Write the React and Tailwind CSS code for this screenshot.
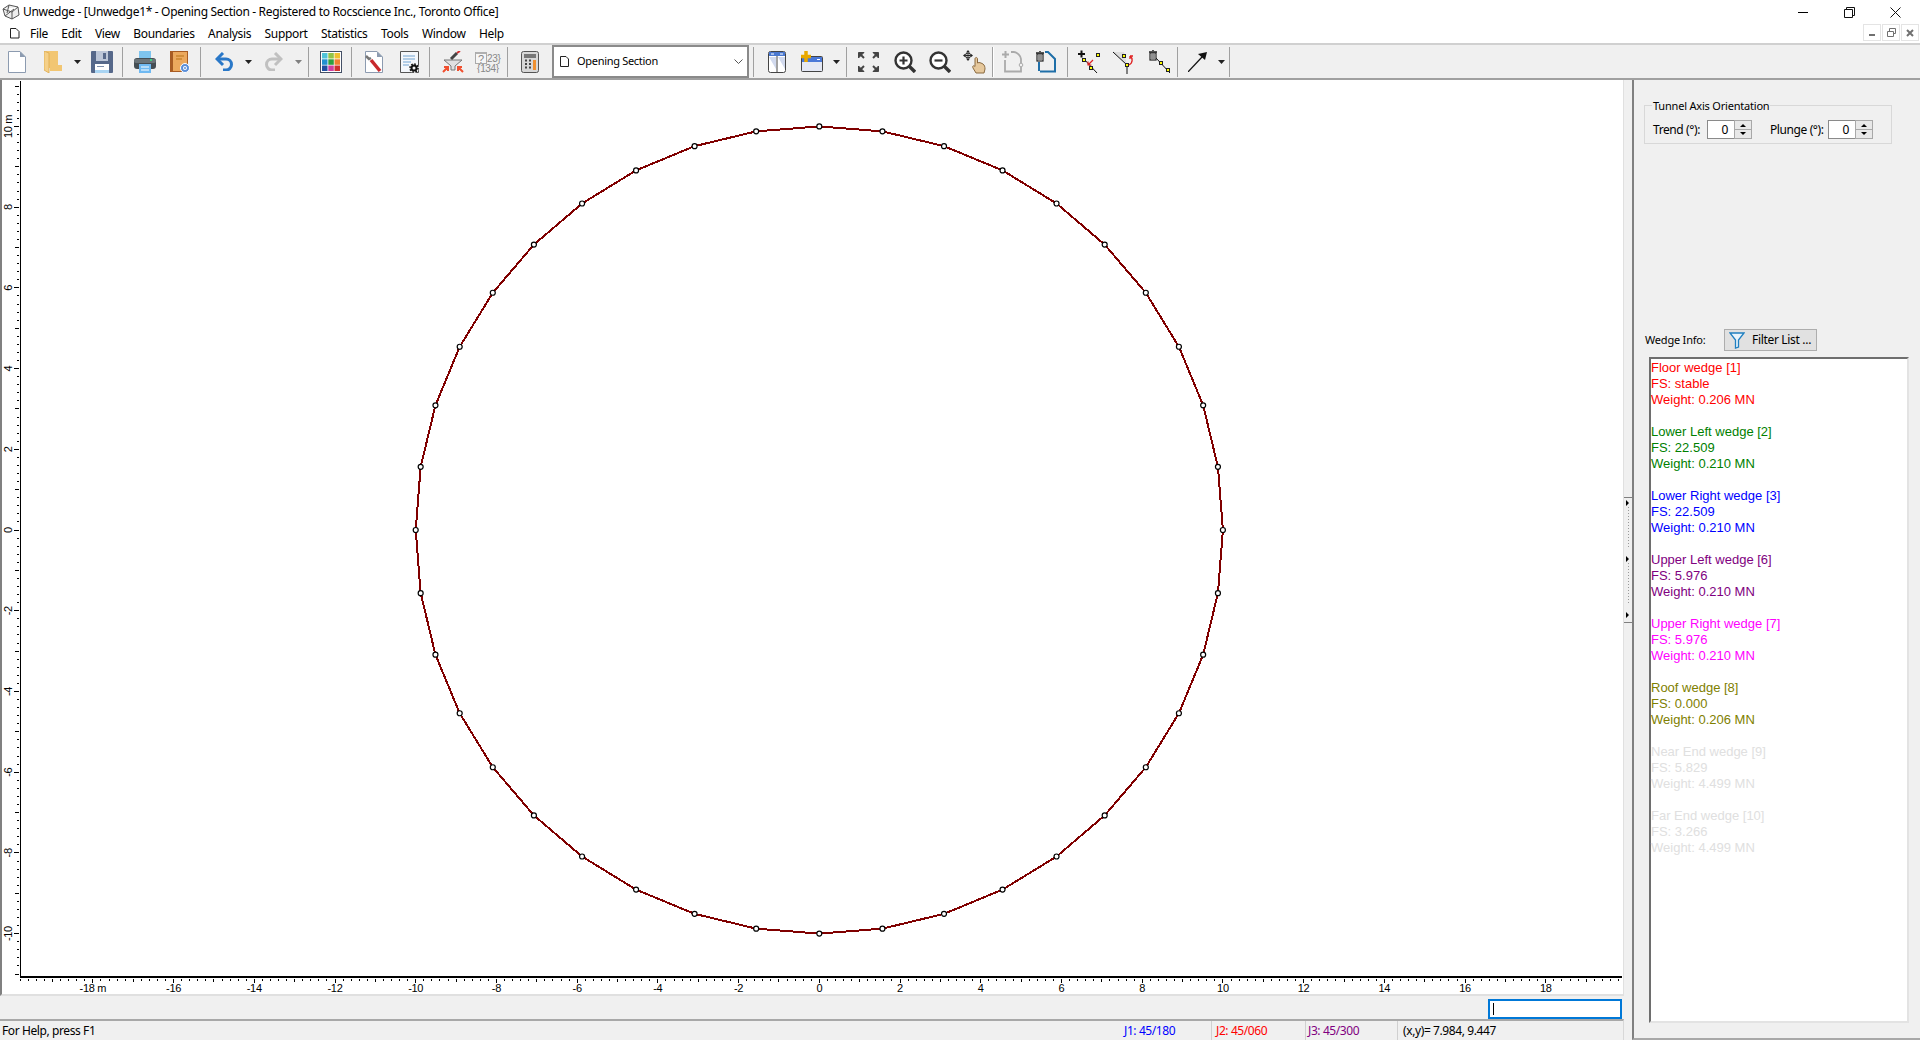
const X0 = 819.3
const Y0 = 530
const UNIT = 40.36

const vertices = Array.from({ length: 40 }, (_, i) => {
  const a = (i * 9 * Math.PI) / 180
  return [X0 + 403.6 * Math.cos(a), Y0 + 403.6 * Math.sin(a)]
})

const wedges = [
  { name: "Floor wedge [1]", fs: "stable", weight: "0.206", color: "text-[#ff0000]" },
  { name: "Lower Left wedge [2]", fs: "22.509", weight: "0.210", color: "text-[#008000]" },
  { name: "Lower Right wedge [3]", fs: "22.509", weight: "0.210", color: "text-[#0000ff]" },
  { name: "Upper Left wedge [6]", fs: "5.976", weight: "0.210", color: "text-[#800080]" },
  { name: "Upper Right wedge [7]", fs: "5.976", weight: "0.210", color: "text-[#ff00ff]" },
  { name: "Roof wedge [8]", fs: "0.000", weight: "0.206", color: "text-[#808000]" },
  { name: "Near End wedge [9]", fs: "5.829", weight: "4.499", color: "text-[#e0e0e0]" },
  { name: "Far End wedge [10]", fs: "3.266", weight: "4.499", color: "text-[#e0e0e0]" },
]

const menus = ["File", "Edit", "View", "Boundaries", "Analysis", "Support", "Statistics", "Tools", "Window", "Help"]

function Sep({ className = "" }) {
  return <div className={`w-px h-[30px] bg-[#a0a0a0] shrink-0 ${className}`} />
}

function Drop({ className = "", color = "#222" }) {
  return (
    <svg width="7" height="4" viewBox="0 0 7 4" className={`shrink-0 ${className}`}>
      <path d="M0 0H7L3.5 4Z" fill={color} />
    </svg>
  )
}

function Icon({ w, h = 22, className = "", children }) {
  return (
    <svg width={w} height={h} viewBox={`0 0 ${w} ${h}`} className={`shrink-0 ${className}`}>
      {children}
    </svg>
  )
}

function Node({ x, y }) {
  return <rect x={x - 1.5} y={y - 1.5} width="3" height="3" fill="#ffff00" stroke="#222" strokeWidth="1" />
}

function Trash({ x, y }) {
  return (
    <g transform={`translate(${x} ${y})`} stroke="#222" fill="#fff">
      <path d="M0 2H8M3 0H5" strokeWidth="1.4" />
      <rect x="1" y="3" width="6" height="7" strokeWidth="1.2" />
      <path d="M3 4V9M5 4V9" strokeWidth="1" />
    </g>
  )
}

function Toolbar() {
  return (
    <div className="flex items-center h-[37px] border-t-2 border-t-[#d0d0d0] border-b-2 border-b-[#a0a0a0] bg-[#f0f0f0] shrink-0">
      <Icon w={18} className="ml-[8px]">
        <path d="M.5.5H12L17.5 6V21.5H.5Z" fill="#fff" stroke="#8c9bb0" />
        <path d="M12 .5L17.5 6H12Z" fill="#8c9bb0" />
      </Icon>
      <Icon w={18} className="ml-[18px]">
        <path d="M2 0H14V14H18V20H6V17H2Z" fill="#f2c672" />
        <path d="M0 0L5 2V22L0 19Z" fill="#f5d088" stroke="#dca94c" strokeWidth=".8" />
      </Icon>
      <Drop className="ml-[12px]" />
      <Icon w={22} className="ml-[10px]">
        <rect width="22" height="22" rx="1" fill="#56688a" />
        <rect x="5" width="12" height="10" fill="#bcc6d8" />
        <rect x="12" y="2" width="3" height="6" fill="#56688a" />
        <rect x="4" y="13" width="14" height="9" fill="#fff" />
        <rect x="6" y="15" width="7" height="1" fill="#7f90ad" />
        <rect x="4" y="19" width="14" height="3" fill="#a9d4f2" />
      </Icon>
      <Sep className="ml-[9px]" />
      <Icon w={22} className="ml-[11px]">
        <rect x="5" width="12" height="9" fill="#7ec4ee" />
        <rect y="7" width="22" height="11" rx="3" fill="#454e54" />
        <rect y="8" width="22" height="4" rx="2" fill="#6b7479" />
        <rect x="16" y="8" width="2" height="2" fill="#3fd17f" />
        <rect x="5" y="13" width="12" height="9" fill="#6fb9f2" />
        <path d="M7 16H15M7 19H15" stroke="#fff" />
      </Icon>
      <Icon w={20} className="ml-[14px]">
        <rect x=".5" y=".5" width="17" height="20" fill="#eca95e" stroke="#a85c24" />
        <rect x="1" y="1" width="2" height="19" fill="#a85c24" />
        <path d="M6 5H14M6 8H12" stroke="#c9852f" strokeWidth="1.5" />
        <circle cx="15" cy="17" r="4.5" fill="#5a8ed8" stroke="#fff" />
        <circle cx="15" cy="17" r="2" fill="#fff" />
        <circle cx="15" cy="17" r="1" fill="#5a8ed8" />
      </Icon>
      <Sep className="ml-[10px]" />
      <Icon w={19} h={19} className="ml-[14px]">
        <path d="M4 7H11A5.5 5.5 0 0 1 11 18H8" fill="none" stroke="#2a78c8" strokeWidth="3" />
        <path d="M8 1L2 7L8 13" fill="none" stroke="#2a78c8" strokeWidth="3" />
      </Icon>
      <Drop className="ml-[11px]" />
      <Icon w={19} h={19} className="ml-[12px]">
        <g transform="translate(19 0) scale(-1 1)">
          <path d="M4 7H11A5.5 5.5 0 0 1 11 18H8" fill="none" stroke="#c0c0c0" strokeWidth="3" />
          <path d="M8 1L2 7L8 13" fill="none" stroke="#c0c0c0" strokeWidth="3" />
        </g>
      </Icon>
      <Drop className="ml-[12px]" color="#808080" />
      <Sep className="ml-[6px]" />
      <Icon w={22} className="ml-[11px]">
        <rect width="22" height="22" fill="#445066" />
        <rect x="1" y="1" width="20" height="20" fill="#fff" />
        <rect x="2" y="2" width="5.5" height="5.5" fill="#4fc3d9" />
        <rect x="8.3" y="2" width="5.5" height="5.5" fill="#93c448" />
        <rect x="14.5" y="2" width="5.5" height="5.5" fill="#f0c030" />
        <rect x="2" y="8.3" width="5.5" height="5.5" fill="#2090d0" />
        <rect x="8.3" y="8.3" width="5.5" height="5.5" fill="#2ea040" />
        <rect x="14.5" y="8.3" width="5.5" height="5.5" fill="#f08030" />
        <rect x="2" y="14.5" width="5.5" height="5.5" fill="#1f4fa0" />
        <rect x="8.3" y="14.5" width="5.5" height="5.5" fill="#d040a0" />
        <rect x="14.5" y="14.5" width="5.5" height="5.5" fill="#d03030" />
      </Icon>
      <Sep className="ml-[9px]" />
      <Icon w={18} className="ml-[13px]">
        <path d="M.5.5H12L17.5 6V21.5H.5Z" fill="#fff" stroke="#8c9bb0" />
        <path d="M12 .5L17.5 6H12Z" fill="#8c9bb0" />
        <path d="M6 9L15 20" stroke="#c8282c" strokeWidth="3.5" />
        <path d="M1 5L4 8L6 7" fill="none" stroke="#777" strokeWidth="2.5" />
      </Icon>
      <Icon w={19} className="ml-[17px]">
        <path d="M.5.5H18.5V21.5H.5Z" fill="#f4f7fb" stroke="#555" />
        <path d="M3 5H15M3 8H15M3 11H11M3 14H9" stroke="#9cc0e0" strokeWidth="1.5" />
        <circle cx="14" cy="17" r="5" fill="#f0f0f0" />
        <circle cx="14" cy="17" r="2.5" fill="none" stroke="#111" strokeWidth="2" />
        <circle cx="14" cy="17" r="4" fill="none" stroke="#111" strokeWidth="1.6" strokeDasharray="1.6 1.5" />
      </Icon>
      <Sep className="ml-[10px]" />
      <Icon w={22} className="ml-[12px]">
        <path d="M2 9H20L13 15V19H9V15Z" fill="#e0e0e0" stroke="#777" />
        <path d="M9 8L15 2" stroke="#444" strokeWidth="3" />
        <path d="M15 2L18 0" stroke="#d03030" strokeWidth="2" />
        <path d="M1 21L6 16M2 16H6V20M21 21L16 16M20 16H16V20" fill="none" stroke="#f05030" strokeWidth="2" />
      </Icon>
      <Icon w={26} className="ml-[11px]">
        <rect x=".5" y="1.5" width="11" height="11" fill="#f6f6f6" stroke="#aaa" />
        <rect x="1" y="1" width="11" height="2" fill="#b0b0b0" />
        <text x="6" y="12" textAnchor="middle" fontSize="11" fontFamily="Liberation Sans, sans-serif" fill="#888">?</text>
        <text x="12" y="11" fontSize="10" fontFamily="Liberation Sans, sans-serif" fill="#888">23}</text>
        <text x="13" y="21" textAnchor="middle" fontSize="10" fontFamily="Liberation Sans, sans-serif" fill="#888">{"{134}"}</text>
      </Icon>
      <Sep className="ml-[6px]" />
      <Icon w={18} className="ml-[13px]">
        <rect x=".5" y=".5" width="17" height="21" rx="2" fill="#d8d8d8" stroke="#555" />
        <rect x="3" y="3" width="12" height="4" fill="#777" />
        <path d="M4 9.5H6M8 9.5H10M4 13H6M8 13H10M4 16.5H6M8 16.5H10" stroke="#444" strokeWidth="2" />
        <rect x="12" y="9" width="3" height="10" fill="#f09030" />
      </Icon>
      <div className="ml-[13px] w-[197px] h-[33px] shrink-0 flex items-center border-2 border-[#8a8a8a] bg-white">
        <Icon w={9} h={11} className="ml-[6px]">
          <path d="M.5.5H6L8.5 3V10.5H.5Z" fill="#fff" stroke="#222" />
        </Icon>
        <span className="ml-[8px] text-[11px] tracking-[-0.3px]">Opening Section</span>
        <svg width="9" height="6" viewBox="0 0 9 6" className="ml-auto mr-[4px]">
          <path d="M.5 .5L4.5 4.5L8.5 .5" fill="none" stroke="#555" />
        </svg>
      </div>
      <Sep className="ml-[4px]" />
      <Icon w={18} className="ml-[14px]">
        <rect x=".5" y=".5" width="17" height="21" rx="2" fill="#fff" stroke="#444" />
        <path d="M10 6L17 18V6ZM1 6L8 18V6Z" fill="#d2daee" />
        <rect x="1" y="1" width="16" height="4" fill="#4a78d0" />
        <path d="M3 3H6M12 3H15" stroke="#fff" />
        <path d="M9 5V21" stroke="#444" />
      </Icon>
      <Icon w={22} h={21} className="ml-[15px]">
        <rect x=".5" y="5.5" width="21" height="15" rx="1" fill="#e4e8f4" stroke="#444" />
        <rect x="1" y="6" width="20" height="5" fill="#4a78d8" />
        <path d="M16 8.5H19" stroke="#fff" />
        <path d="M5 0V11M0 5.5H10" stroke="#e8a800" strokeWidth="3.5" />
      </Icon>
      <Drop className="ml-[10px]" />
      <Sep className="ml-[6px]" />
      <Icon w={21} h={20} className="ml-[11px]">
        <g fill="#444" stroke="#444">
          <path d="M.5 .5H6L.5 6Z" />
          <path d="M2 2L6 6" strokeWidth="2" />
          <path d="M20.5 .5H15L20.5 6Z" />
          <path d="M19 2L15 6" strokeWidth="2" />
          <path d="M.5 19.5H6L.5 14Z" />
          <path d="M2 18L6 14" strokeWidth="2" />
          <path d="M20.5 19.5H15L20.5 14Z" />
          <path d="M19 18L15 14" strokeWidth="2" />
        </g>
      </Icon>
      <Icon w={22} className="ml-[15px]">
        <circle cx="9.5" cy="9.5" r="8" fill="#fff" stroke="#333" strokeWidth="2.4" />
        <path d="M15 15L21 21" stroke="#333" strokeWidth="3.4" />
        <path d="M5.5 9.5H13.5M9.5 5.5V13.5" stroke="#333" strokeWidth="2.2" />
      </Icon>
      <Icon w={22} className="ml-[13px]">
        <circle cx="9.5" cy="9.5" r="8" fill="#fff" stroke="#333" strokeWidth="2.4" />
        <path d="M15 15L21 21" stroke="#333" strokeWidth="3.4" />
        <path d="M5.5 9.5H13.5" stroke="#333" strokeWidth="2.2" />
      </Icon>
      <Icon w={24} h={24} className="ml-[12px]">
        <path d="M5 0L7 2.500H3ZM5 11L7 8.500H3ZM0 5.500L2.500 3.500V7.500ZM10 5.500L7.500 3.500V7.500Z" fill="#222" />
        <circle cx="5" cy="5.500" r="2.500" fill="#fff" stroke="#222" />
        <path d="M5 3V8M2.500 5.500H7.500" stroke="#222" />
        <path d="M12 9C12 7 14.500 7 14.500 9V13L16 12.500L18 13L20 14C21.500 15 22 17 22 19L21 23H13L10 18C9 16 10.500 15 12 16.500Z" fill="#e6c89c" stroke="#8a6a40" />
      </Icon>
      <Sep className="ml-[5px] border-r border-white box-content" />
      <Icon w={22} className="ml-[8px]">
        <path d="M3 9V20.500H19V16M19 12V8C19 5 15 1 12 1H9" fill="none" stroke="#aaa" strokeWidth="1.800" />
        <circle cx="19" cy="14" r="1.800" fill="none" stroke="#aaa" />
        <path d="M0 3.500H7M3.500 0V7" stroke="#aaa" strokeWidth="2" />
      </Icon>
      <Icon w={22} className="ml-[11px]">
        <path d="M5 20.500H20V8L13 1H10" fill="none" stroke="#1f6fa8" strokeWidth="2" />
        <path d="M4 20V11" stroke="#1f6fa8" strokeWidth="2" />
        <Trash x={1} y={0} />
      </Icon>
      <Sep className="ml-[10px]" />
      <Icon w={22} h={24} className="ml-[10px]">
        <path d="M5 8L19 23" stroke="#111" />
        <path d="M0 4H7M3.500 .5V7.500" stroke="#111" strokeWidth="2" />
        <Node x={6} y={10} />
        <Node x={13} y={18} />
        <Node x={20} y={5} />
        <path d="M15 10L10 15M10 11.500V15H13.500" fill="none" stroke="#e02020" strokeWidth="1.200" />
      </Icon>
      <Icon w={23} h={24} className="ml-[12px]">
        <path d="M1 2L12 2L15 15Z" fill="#ddd" />
        <path d="M1 2L15 15V24" fill="none" stroke="#111" />
        <Node x={12} y={6} />
        <Node x={15} y={15} />
        <path d="M17 15C21 13 21 8 18 6M18 6L21 6M18 6L18 9" fill="none" stroke="#e02020" strokeWidth="1.300" />
      </Icon>
      <Icon w={22} h={24} className="ml-[13px]">
        <path d="M8 8L22 23" stroke="#111" />
        <Trash x={1} y={0} />
        <Node x={13} y={13} />
        <Node x={20} y={20} />
      </Icon>
      <Sep className="ml-[7px]" />
      <Icon w={19} h={20} className="ml-[10px]">
        <path d="M0 20L15 4" stroke="#111" strokeWidth="1.200" />
        <path d="M19 0L10 2L17 8Z" fill="#111" />
      </Icon>
      <Drop className="ml-[11px]" />
      <Sep className="ml-[4px]" />
    </div>
  )
}

function Canvas() {
  const xTicks = []
  for (let i = -99; i <= 99; i++) {
    const len = i % 10 === 0 ? 4 : i % 5 === 0 ? 3 : 2
    const x = X0 + (i / 5) * UNIT
    xTicks.push(`M${x.toFixed(1)} 979V${979 + len}`)
  }
  const yTicks = []
  for (let i = -55; i <= 55; i++) {
    const len = i % 10 === 0 ? 5 : i % 5 === 0 ? 4 : 2
    const y = Y0 + (i / 5) * UNIT
    yTicks.push(`M19 ${y.toFixed(1)}H${19 - len}`)
  }
  const xLabels = []
  for (let v = -18; v <= 18; v += 2) xLabels.push(v)
  const yLabels = []
  for (let v = -10; v <= 10; v += 2) yLabels.push(v)
  const points = vertices.map((p) => p.join(",")).join(" ")

  return (
    <div className="w-[1624px] h-[916px] border-l-2 border-l-[#808080] border-r border-r-[#e0e0e0] border-b-2 border-b-[#e0e0e0] bg-white">
      <svg width="1621" height="914" viewBox="2 80 1621 914" className="block">
        <g stroke="#000" shapeRendering="crispEdges">
          <path d="M20.5 81V977H1622" fill="none" strokeWidth="1.5" />
          <path d={xTicks.join("")} strokeWidth="1" />
          <path d={yTicks.join("")} strokeWidth="1" />
        </g>
        <g fontFamily="Liberation Sans, sans-serif" fontSize="11" fill="#000">
          {xLabels.map((v) => (
            <text key={v} x={X0 + v * UNIT} y="992" textAnchor="middle">
              {v === -18 ? "-18 m" : v}
            </text>
          ))}
          {yLabels.map((v) => {
            const y = Y0 - v * UNIT
            return (
              <text key={v} x="12" y={y} textAnchor="middle" transform={`rotate(-90 12 ${y})`}>
                {v === 10 ? "10 m" : v}
              </text>
            )
          })}
        </g>
        <polygon points={points} fill="none" stroke="#800000" strokeWidth="2" shapeRendering="crispEdges" />
        {vertices.map((p, i) => (
          <circle key={i} cx={p[0]} cy={p[1]} r="2.5" fill="#fff" stroke="#000" strokeWidth="1.2" />
        ))}
      </svg>
    </div>
  )
}

function Spin({ value, className = "" }) {
  return (
    <div className={`flex w-[45px] h-[19px] shrink-0 ${className}`}>
      <div className="w-[27px] border border-[#8a8a8a] border-r-0 bg-white flex items-center justify-end pr-[6px] text-[12px]">
        {value}
      </div>
      <div className="w-[18px] border border-[#a8a8a8] bg-[#e8e8e8] flex flex-col items-center justify-around py-[2px]">
        <div className="w-0 h-0 border-x-[3px] border-x-transparent border-b-[3px] border-b-black" />
        <div className="w-full h-px bg-[#a8a8a8]" />
        <div className="w-0 h-0 border-x-[3px] border-x-transparent border-t-[3px] border-t-black" />
      </div>
    </div>
  )
}

export default function App() {
  return (
    <div className="w-[1920px] h-[1040px] flex flex-col overflow-hidden bg-white text-black text-[12px] tracking-[-0.32px] font-['Noto_Sans',sans-serif]">
      <div className="flex items-center h-[24px] shrink-0">
        <svg width="18" height="16" viewBox="0 0 18 16" className="ml-[2px]">
          <path d="M1 5L7 1L16 3L17 11L10 15L3 12ZM1 5L10 8L16 3M10 8V15M7 1L5 9M3 12L12 5" fill="#eee" stroke="#555" />
        </svg>
        <span className="ml-[3px]">Unwedge - [Unwedge1* - Opening Section - Registered to Rocscience Inc., Toronto Office]</span>
        <div className="ml-auto flex mr-[2px]">
          <div className="w-[46px] h-[24px] flex items-center justify-center">
            <div className="w-[10px] h-px bg-black" />
          </div>
          <div className="w-[46px] h-[24px] flex items-center justify-center">
            <svg width="11" height="11" viewBox="0 0 11 11">
              <path d="M.5 2.500H8.500V10.500H.5ZM2.500 2.500V.5H10.500V8.500H8.500" fill="none" stroke="#111" />
            </svg>
          </div>
          <div className="w-[46px] h-[24px] flex items-center justify-center">
            <svg width="11" height="11" viewBox="0 0 11 11">
              <path d="M.5 .5L10.500 10.500M10.500 .5L.5 10.500" stroke="#111" />
            </svg>
          </div>
        </div>
      </div>

      <div className="flex items-start h-[19px] shrink-0">
        <svg width="11" height="11" viewBox="0 0 11 11" className="ml-[9px] mt-[4px]">
          <path d="M1.500 .5H7L10 3.500V10H1.500Z" fill="#fff" stroke="#222" />
        </svg>
        <div className="flex gap-[13.4px] ml-[10px] h-[19px] items-center">
          {menus.map((m) => (
            <span key={m}>{m}</span>
          ))}
        </div>
        <div className="ml-auto flex gap-px mr-px">
          <div className="w-[18px] h-[17px] border border-[#e4e4e4] flex items-end justify-center pb-[4px]">
            <div className="w-[6px] h-[2px] bg-[#707070]" />
          </div>
          <div className="w-[18px] h-[17px] border border-[#e4e4e4] flex items-center justify-center">
            <svg width="9" height="9" viewBox="0 0 9 9">
              <path d="M.5 3.500H6.500V8.500H.5ZM2.500 3V.5H8.500V5.500H7" fill="none" stroke="#707070" />
            </svg>
          </div>
          <div className="w-[18px] h-[17px] border border-[#e4e4e4] flex items-center justify-center">
            <svg width="8" height="8" viewBox="0 0 8 8">
              <path d="M1 1L7 7M7 1L1 7" stroke="#707070" strokeWidth="2" />
            </svg>
          </div>
        </div>
      </div>

      <Toolbar />

      <div className="flex flex-1 min-h-0 bg-[#f0f0f0]">
        <div className="w-[1624px] flex flex-col shrink-0">
          <Canvas />
          <div className="h-[23px] flex justify-end pt-[3px] pr-[2px] shrink-0">
            <div className="w-[134px] h-[20px] border-2 border-[#0078d7] bg-white flex items-center pl-[3px]">
              <div className="w-px h-[12px] bg-black" />
            </div>
          </div>
          <div className="flex-1 flex items-center border-t-2 border-t-[#a8a8a8] border-r border-r-[#d8d8d8] tracking-[-0.4px]">
            <div className="w-[1120px] pl-[2px]">For Help, press F1</div>
            <div className="w-[92px] pl-[4px] h-full flex items-center border-r border-r-[#d0d0d0] text-[#0000ff]">J1: 45/180</div>
            <div className="w-[94px] pl-[4px] h-full flex items-center border-r border-r-[#d0d0d0] text-[#ff0000]">J2: 45/060</div>
            <div className="w-[92px] pl-[2px] h-full flex items-center border-r border-r-[#d0d0d0] text-[#800080]">J3: 45/300</div>
            <div className="pl-[5px]">(x,y)= 7.984, 9.447</div>
          </div>
        </div>

        <div className="w-[8px] shrink-0 pt-[417px]">
          <svg width="8" height="126" viewBox="0 0 8 126" className="block">
            <path d="M0 .5H8M0 125.500H8" stroke="#808080" />
            <path d="M4.500 10V50M4.500 66V106" stroke="#999" strokeDasharray="1 2" />
            <path d="M2 3V9L5 6ZM2 59V65L5 62ZM2 115V121L5 118Z" fill="#000" />
          </svg>
        </div>

        <div className="w-[288px] shrink-0 flex flex-col border-l-2 border-l-[#808080] border-b-2 border-b-[#a8a8a8] pt-[17px]">
          <fieldset className="ml-[10px] w-[248px] border border-[#d8d8d8] pb-[4px] shrink-0">
            <legend className="ml-[7px] px-px h-[16px] leading-[18px] text-[11px] tracking-[-0.2px]">Tunnel Axis Orientation</legend>
            <div className="flex items-center mt-[7px] tracking-[-0.4px]">
              <span className="ml-[8px] w-[54px] shrink-0">Trend (°):</span>
              <Spin value="0" />
              <span className="ml-[18px] w-[58px] shrink-0">Plunge (°):</span>
              <Spin value="0" />
            </div>
          </fieldset>

          <div className="flex items-center mt-[185px] h-[22px] shrink-0">
            <span className="ml-[11px] w-[79px] shrink-0 text-[11px] tracking-[-0.2px]">Wedge Info:</span>
            <div className="w-[93px] h-[22px] border border-[#adadad] bg-[#e1e1e1] flex items-center pl-[4px]">
              <svg width="16" height="17" viewBox="0 0 16 17">
                <path d="M1 1H15L9.500 8V15L6.500 16V8Z" fill="#e8f4fc" stroke="#1f7fc0" strokeWidth="1.300" />
              </svg>
              <span className="ml-[7px]">Filter List ...</span>
            </div>
          </div>

          <div className="ml-[15px] mt-[6px] w-[260px] h-[666px] border-l-2 border-t-2 border-l-[#6e6e6e] border-t-[#6e6e6e] border-r-2 border-b-2 border-r-[#e3e3e3] border-b-[#e3e3e3] bg-white pt-[1px] text-[13px] leading-[16px] tracking-normal font-['Liberation_Sans',sans-serif]">
            {wedges.map((w) => (
              <div key={w.name} className={`mb-[16px] ${w.color}`}>
                <div>{w.name}</div>
                <div>FS: {w.fs}</div>
                <div>Weight: {w.weight} MN</div>
              </div>
            ))}
          </div>
        </div>
      </div>
    </div>
  )
}
